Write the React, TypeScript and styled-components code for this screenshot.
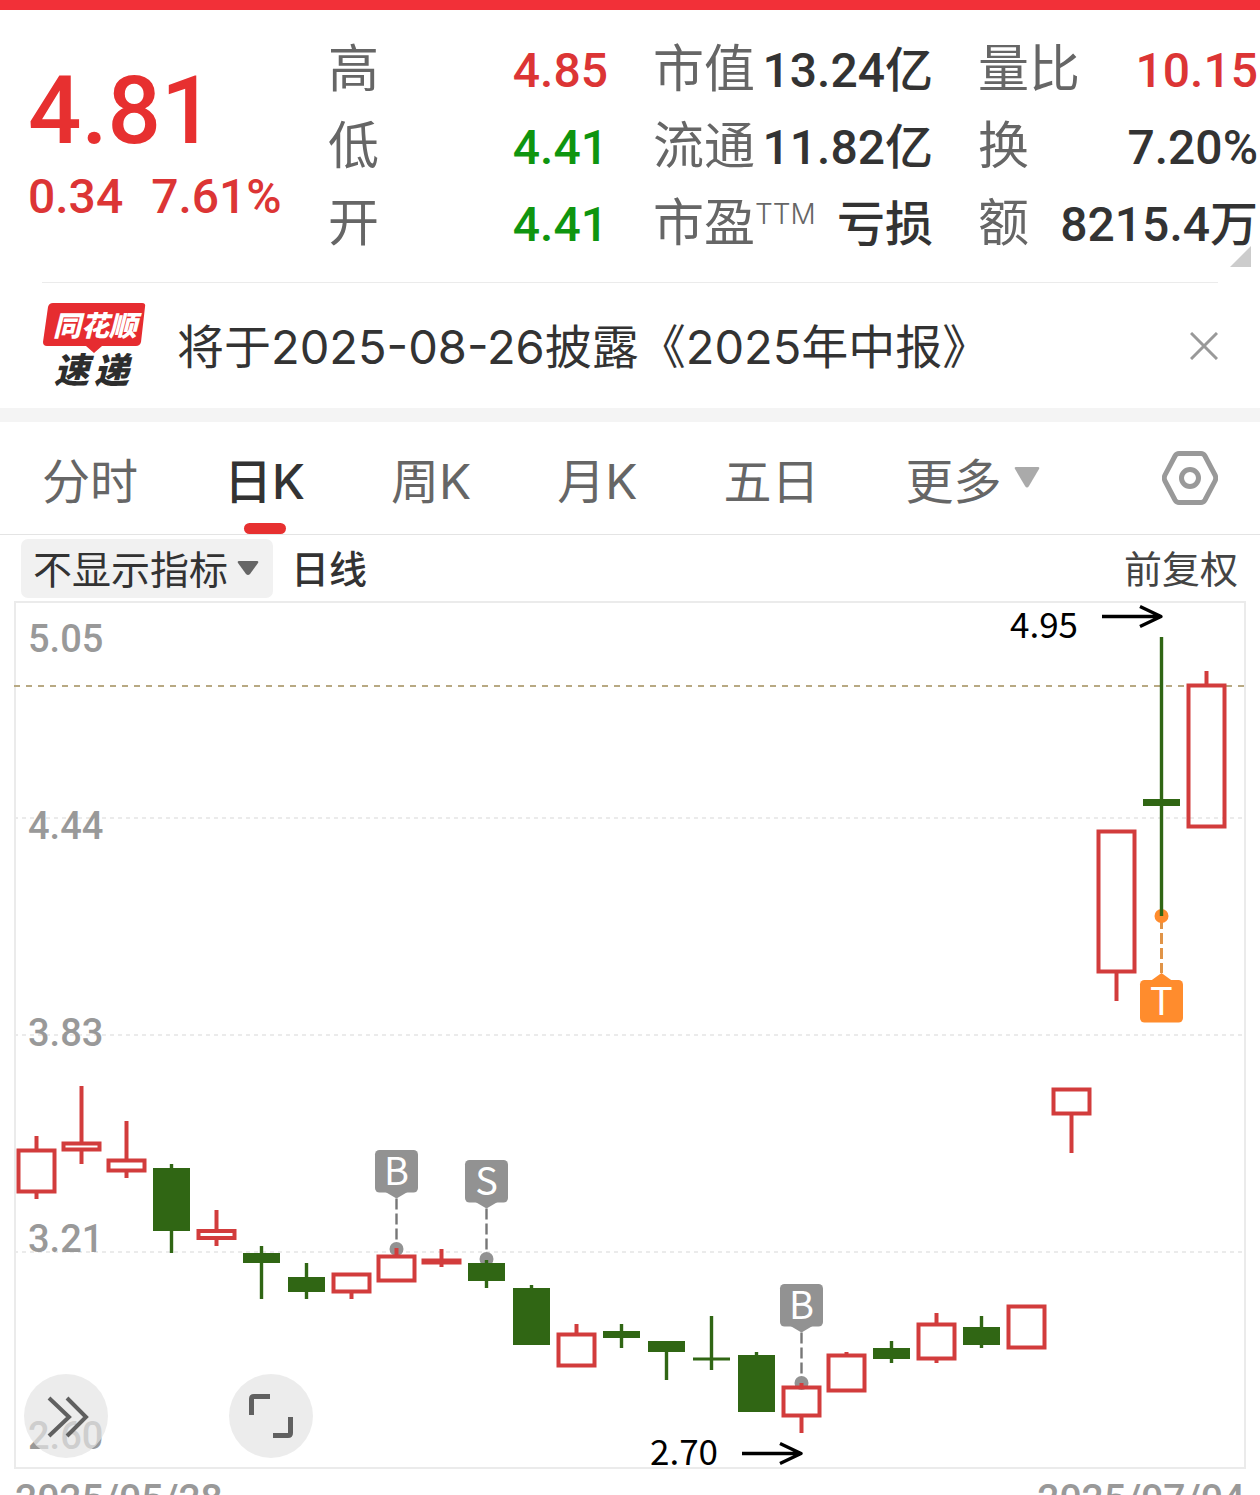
import React, { useState } from "react";
import styled, { createGlobalStyle } from "styled-components";

const cjk = `"Noto Sans CJK SC", "Noto Sans", sans-serif`;
const numeric = `Roboto, "Noto Sans CJK SC", sans-serif`;
const mixed = `Inter, "Noto Sans CJK SC", sans-serif`;

const color = {
  brand: "#f23038",
  up: "#dc3535",
  upStrong: "#e73030",
  down: "#0f950f",
  ink: "#333333",
  label: "#666666",
  muted: "#999999",
  line: "#ebebeb",
  candleUp: "#d23c3c",
  candleDown: "#306614",
};

const GlobalStyle = createGlobalStyle`
  *, *::before, *::after { box-sizing: border-box; }
  body { margin: 0; background: #ffffff; font-family: ${cjk}; color: ${color.ink}; }
  button, select { font: inherit; color: inherit; border: 0; background: none; padding: 0; margin: 0; cursor: pointer; }
  dl, dd, dt, p, h1 { margin: 0; font-weight: inherit; }
`;

const Page = styled.main`
  height: 100vh;
  overflow: hidden;
  background: #ffffff;
  white-space: nowrap;
`;

const TopBar = styled.div`
  height: 10px;
  background: ${color.brand};
`;

const Quote = styled.section`
  position: relative;
  display: flex;
  padding: 17px 2px 24px 28px;
`;

const Summary = styled.div`
  width: 300px;
  flex: none;
  padding-top: 34px;
  font-family: ${numeric};
  font-weight: 500;
`;

const Price = styled.h1`
  font-size: 94px;
  line-height: 100px;
  font-weight: 500;
  color: ${color.upStrong};
`;

const Change = styled.p`
  display: flex;
  gap: 28px;
  font-size: 48px;
  line-height: 72px;
  color: ${color.up};
`;

const Stats = styled.dl`
  flex: 1;
  display: grid;
  grid-template-columns: repeat(3, 1fr);
  grid-auto-rows: 77px;
  column-gap: 45px;
`;

const Stat = styled.div`
  display: flex;
  justify-content: space-between;
  align-items: baseline;
  line-height: 77px;
  min-width: 0;
`;

const StatLabel = styled.dt`
  font-size: 51px;
  color: ${color.label};
`;

const Superscript = styled.sup`
  font-family: ${mixed};
  font-size: 28px;
  font-weight: 300;
  line-height: 28px;
  vertical-align: 17px;
`;

const StatValue = styled.dd<{ $tone?: "up" | "down" }>`
  font-family: ${numeric};
  font-size: 48px;
  font-weight: 500;
  color: ${(p) => (p.$tone ? color[p.$tone] : color.ink)};
`;

const Corner = styled.span`
  position: absolute;
  right: 9px;
  bottom: 15px;
  border-style: solid;
  border-width: 0 0 21px 21px;
  border-color: transparent transparent #cccccc transparent;
`;

const Notice = styled.section`
  display: flex;
  align-items: center;
  height: 126px;
  margin: 0 42px;
  border-top: 1px solid ${color.line};
`;

const Logo = styled.svg`
  display: block;
  flex: none;
  overflow: visible;
`;

const NoticeText = styled.p`
  flex: 1;
  padding: 3px 0 0 30px;
  font-family: ${mixed};
  font-size: 47px;
  line-height: 60px;
`;

const IconButton = styled.button`
  display: flex;
  flex: none;
  margin-left: auto;
`;

const Band = styled.div`
  height: 14px;
  background: #f4f4f4;
`;

const Tabs = styled.nav`
  display: flex;
  align-items: center;
  height: 113px;
  gap: 86px;
  padding: 0 42px;
  border-bottom: 1px solid #e4e4e4;
`;

const Tab = styled.button<{ $active?: boolean }>`
  position: relative;
  display: flex;
  align-items: center;
  gap: 12px;
  height: 112px;
  font-family: ${mixed};
  font-size: 48px;
  font-weight: ${(p) => (p.$active ? 500 : 400)};
  color: ${(p) => (p.$active ? color.ink : color.label)};

  &::after {
    content: "";
    display: ${(p) => (p.$active ? "block" : "none")};
    position: absolute;
    left: calc(50% - 21px);
    bottom: 0;
    width: 42px;
    height: 11px;
    border-radius: 6px;
    background: ${color.upStrong};
  }
`;

const Toolbar = styled.div`
  display: flex;
  align-items: center;
  gap: 18px;
  padding: 4px 22px 3px 21px;
  font-size: 39px;
`;

const Picker = styled.label`
  position: relative;
  display: flex;
  align-items: center;

  svg {
    position: absolute;
    right: 14px;
    pointer-events: none;
  }
`;

const PickerSelect = styled.select`
  appearance: none;
  width: 252px;
  height: 59px;
  padding: 0 44px 4px 12px;
  border-radius: 7px;
  background: #f1f1f1;
`;

const Period = styled.span`
  padding-bottom: 4px;
  font-size: 38px;
  font-weight: 500;
  line-height: 55px;
`;

const Adjust = styled.button`
  margin-left: auto;
  padding-bottom: 4px;
  font-size: 38px;
  line-height: 55px;
  color: #444444;
`;

const ChartArea = styled.section`
  position: relative;
  margin: 0 14px;
`;

const ChartSvg = styled.svg`
  display: block;
  width: 100%;
  height: auto;
  overflow: visible;
`;

const RoundButton = styled.button<{ $left: number }>`
  position: absolute;
  left: ${(p) => p.$left}px;
  bottom: 11px;
  width: 84px;
  height: 84px;
  border-radius: 50%;
  background: rgba(228, 228, 228, 0.7);

  svg {
    display: block;
  }
`;

const Dates = styled.div`
  display: flex;
  justify-content: space-between;
  padding: 6px 15px 0;
  font-family: ${numeric};
  font-size: 39px;
  font-weight: 500;
  line-height: 48px;
  color: ${color.muted};
`;

type StatItem = {
  label: string;
  sup?: string;
  value: string;
  tone?: "up" | "down";
};

const stats: StatItem[] = [
  { label: "高", value: "4.85", tone: "up" },
  { label: "市值", value: "13.24亿" },
  { label: "量比", value: "10.15", tone: "up" },
  { label: "低", value: "4.41", tone: "down" },
  { label: "流通", value: "11.82亿" },
  { label: "换", value: "7.20%" },
  { label: "开", value: "4.41", tone: "down" },
  { label: "市盈", sup: "TTM", value: "亏损" },
  { label: "额", value: "8215.4万" },
];

const tabs = ["分时", "日K", "周K", "月K", "五日", "更多"];

// Each candle: direction, then wick top, body top, body bottom, wick bottom.
type Candle = ["up" | "down", number, number, number, number];

const candles: Candle[] = [
  ["up", 535, 549.5, 590.5, 598],
  ["up", 485, 542.5, 548.5, 563],
  ["up", 520, 559.5, 569.5, 577],
  ["down", 563, 567, 630, 652],
  ["up", 609, 630, 637, 645],
  ["down", 645, 652, 662, 698],
  ["down", 662, 676, 691, 698],
  ["up", 673.5, 673.5, 690.5, 698],
  ["up", 647, 655.5, 679.5, 679.5],
  ["up", 648, 659.5, 661.5, 666],
  ["down", 659, 662, 680, 687],
  ["down", 684, 687, 744, 744],
  ["up", 723, 733.5, 764.5, 764.5],
  ["down", 723, 730, 737, 747],
  ["down", 740, 740, 751, 779],
  ["down", 715, 756.5, 759.5, 769],
  ["down", 751, 754, 811, 811],
  ["up", 782, 786.5, 814.5, 832],
  ["up", 751, 754.5, 789.5, 789.5],
  ["down", 740, 747, 758, 762],
  ["up", 712, 723.5, 757.5, 762],
  ["down", 715, 726, 744, 747],
  ["up", 705.5, 705.5, 746.5, 746.5],
  ["up", 488.5, 488.5, 512.5, 552],
  ["up", 230.5, 230.5, 370.5, 400],
  ["down", 36, 198, 205, 315],
  ["up", 70, 84.5, 225.5, 225.5],
];

const candleX = (i: number) => 22.5 + 45 * i;

const gridLines = [217, 434, 651];

const axisLabels: [string, number][] = [
  ["5.05", 51],
  ["4.44", 238],
  ["3.83", 445],
  ["3.21", 651],
  ["2.60", 848],
];

type Trade = { index: number; mark: string; box: number; dot: number };

const trades: Trade[] = [
  { index: 8, mark: "B", box: 549, dot: 648 },
  { index: 10, mark: "S", box: 559, dot: 658 },
  { index: 17, mark: "B", box: 683, dot: 782 },
  { index: 25, mark: "T", box: 379, dot: 315 },
];

function TradeMarker({ index, mark, box, dot }: Trade) {
  const x = candleX(index);
  const above = box < dot;
  const fill = mark === "T" ? "#ff8c2d" : "#929292";
  const tip = above ? box + 48.5 : box - 7;
  const base = above ? box + 42 : box + 1;
  return (
    <g>
      <line
        x1={x}
        x2={x}
        y1={above ? tip : dot + 2}
        y2={above ? dot : tip}
        stroke={mark === "T" ? "#e09448" : "#777777"}
        strokeWidth={mark === "T" ? 3 : 2.4}
        strokeDasharray="11 4"
      />
      <circle cx={x} cy={dot} r={7} fill={fill} />
      <path d={`M${x - 11} ${base}L${x} ${tip}L${x + 11} ${base}Z`} fill={fill} />
      <rect x={x - 21.5} y={box} width={43} height={42.5} rx={4.5} fill={fill} />
      <text
        x={x}
        y={box + 35}
        fill="#ffffff"
        textAnchor="middle"
        fontFamily={cjk}
        fontSize={38}
      >
        {mark}
      </text>
    </g>
  );
}

function CandleShape({ candle, index }: { candle: Candle; index: number }) {
  const [dir, high, top, bottom, low] = candle;
  const x = candleX(index);
  if (dir === "up") {
    return (
      <g stroke={color.candleUp} strokeWidth={4} fill="none">
        {high < top && <line x1={x} x2={x} y1={high} y2={top} />}
        {low > bottom && <line x1={x} x2={x} y1={bottom} y2={low} />}
        <rect x={x - 18} y={top} width={36} height={bottom - top} />
      </g>
    );
  }
  return (
    <g fill={color.candleDown}>
      <rect x={x - 1.7} y={high} width={3.4} height={low - high} />
      <rect x={x - 18.5} y={top} width={37} height={bottom - top} />
    </g>
  );
}

function Extreme({ label, x, y, arrowY }: { label: string; x: number; y: number; arrowY: number }) {
  return (
    <g>
      <text x={x - 151} y={y} fontFamily={cjk} fontSize={35} fill="#000000">
        {label}
      </text>
      <path
        d={`M${x - 59} ${arrowY}H${x}M${x - 21} ${arrowY - 10}L${x} ${arrowY}L${x - 21} ${arrowY + 10}`}
        stroke="#000000"
        strokeWidth={3.4}
        strokeLinejoin="round"
        fill="none"
      />
    </g>
  );
}

function CandleChart() {
  return (
    <ChartSvg viewBox="0 0 1232 868" role="img" aria-label="日K">
      <rect x={1} y={1} width={1230} height={866} fill="#ffffff" stroke={color.line} strokeWidth={2} />
      {gridLines.map((y) => (
        <line key={y} x1={0} x2={1230} y1={y} y2={y} stroke={color.line} strokeWidth={2} strokeDasharray="4 4" />
      ))}
      <line x1={0} x2={1230} y1={85} y2={85} stroke="#b8a983" strokeWidth={2} strokeDasharray="6 6" />
      {axisLabels.map(([text, y]) => (
        <text key={text} x={14} y={y} fontFamily={numeric} fontSize={38} fontWeight={500} fill={color.muted}>
          {text}
        </text>
      ))}
      {trades.map((t) => (
        <TradeMarker key={t.index} {...t} />
      ))}
      {candles.map((c, i) => (
        <CandleShape key={i} candle={c} index={i} />
      ))}
      <Extreme label="4.95" x={1147} y={37} arrowY={15.5} />
      <Extreme label="2.70" x={787} y={864} arrowY={852.5} />
    </ChartSvg>
  );
}

function ExpressLogo() {
  return (
    <Logo width="105" height="86" viewBox="0 0 105 86" role="img" aria-label="同花顺速递">
      <path
        d="M11 0H100Q104 0 103 4L99 39Q98 43 94 43H60L52 50L44 43H5Q1 43 1 39L6 4Q7 0 11 0Z"
        fill="#e62c30"
      />
      <g fontFamily={cjk} fontStyle="italic" fontWeight={900}>
        <text x="11" y="33" fontSize="28" fill="#ffffff">
          同花顺
        </text>
        <text x="12" y="80" fontSize="35" fill="#2d2d2d">
          速
        </text>
        <text x="52" y="80" fontSize="35" fill="#2d2d2d">
          递
        </text>
      </g>
    </Logo>
  );
}

export default function App() {
  const [active, setActive] = useState("日K");
  return (
    <Page>
      <GlobalStyle />
      <TopBar />
      <Quote>
        <Summary>
          <Price>4.81</Price>
          <Change>
            <span>0.34</span>
            <span>7.61%</span>
          </Change>
        </Summary>
        <Stats>
          {stats.map((s) => (
            <Stat key={s.label}>
              <StatLabel>
                {s.label}
                {s.sup && <Superscript>{s.sup}</Superscript>}
              </StatLabel>
              <StatValue $tone={s.tone}>{s.value}</StatValue>
            </Stat>
          ))}
        </Stats>
        <Corner />
      </Quote>
      <Notice>
        <ExpressLogo />
        <NoticeText>将于2025-08-26披露《2025年中报》</NoticeText>
        <IconButton aria-label="关闭">
          <svg width="28" height="28" viewBox="0 0 28 28" fill="none" stroke="#999999" strokeWidth="3">
            <path d="M1 1L27 27M27 1L1 27" />
          </svg>
        </IconButton>
      </Notice>
      <Band />
      <Tabs>
        {tabs.map((t) => (
          <Tab key={t} $active={t === active} onClick={() => setActive(t)}>
            {t}
            {t === "更多" && (
              <svg width="26" height="24" viewBox="0 0 26 24" aria-hidden="true">
                <path d="M2 1H24Q26 1 25 3L15 20Q13 23 11 20L1 3Q0 1 2 1Z" fill="#aaaaaa" />
              </svg>
            )}
          </Tab>
        ))}
        <IconButton aria-label="设置">
          <svg width="56" height="54" viewBox="0 0 56 54" fill="none" stroke="#999999" strokeWidth="5">
            <path d="M17 2.5H39Q41.500 2.5 43 5L53 24Q54.500 27 53 30L43 49Q41.500 51.500 39 51.500H17Q14.500 51.500 13 49L3 30Q1.500 27 3 24L13 5Q14.500 2.5 17 2.5Z" />
            <circle cx="28" cy="27" r="8.500" />
          </svg>
        </IconButton>
      </Tabs>
      <Toolbar>
        <Picker>
          <PickerSelect aria-label="指标" defaultValue="none">
            <option value="none">不显示指标</option>
          </PickerSelect>
          <svg width="22" height="15" viewBox="0 0 22 15" aria-hidden="true">
            <path d="M2 0H20Q22 0 21 2L13 13Q11 15 9 13L1 2Q0 0 2 0Z" fill="#666666" />
          </svg>
        </Picker>
        <Period>日线</Period>
        <Adjust>前复权</Adjust>
      </Toolbar>
      <ChartArea>
        <CandleChart />
        <RoundButton $left={10} aria-label="展开">
          <svg width="84" height="84" viewBox="0 0 84 84" fill="none" stroke="#606060" strokeWidth="4">
            <path d="M25 24L45 43L25 62M43 24L62 43L43 62" />
          </svg>
        </RoundButton>
        <RoundButton $left={215} aria-label="全屏">
          <svg width="84" height="84" viewBox="0 0 84 84" fill="none" stroke="#606060" strokeWidth="5">
            <path d="M22.500 41V25Q22.500 22.500 25 22.500H41M44 61.500H59Q61.500 61.500 61.500 59V43" />
          </svg>
        </RoundButton>
      </ChartArea>
      <Dates>
        <span>2025/05/28</span>
        <span>2025/07/04</span>
      </Dates>
    </Page>
  );
}
